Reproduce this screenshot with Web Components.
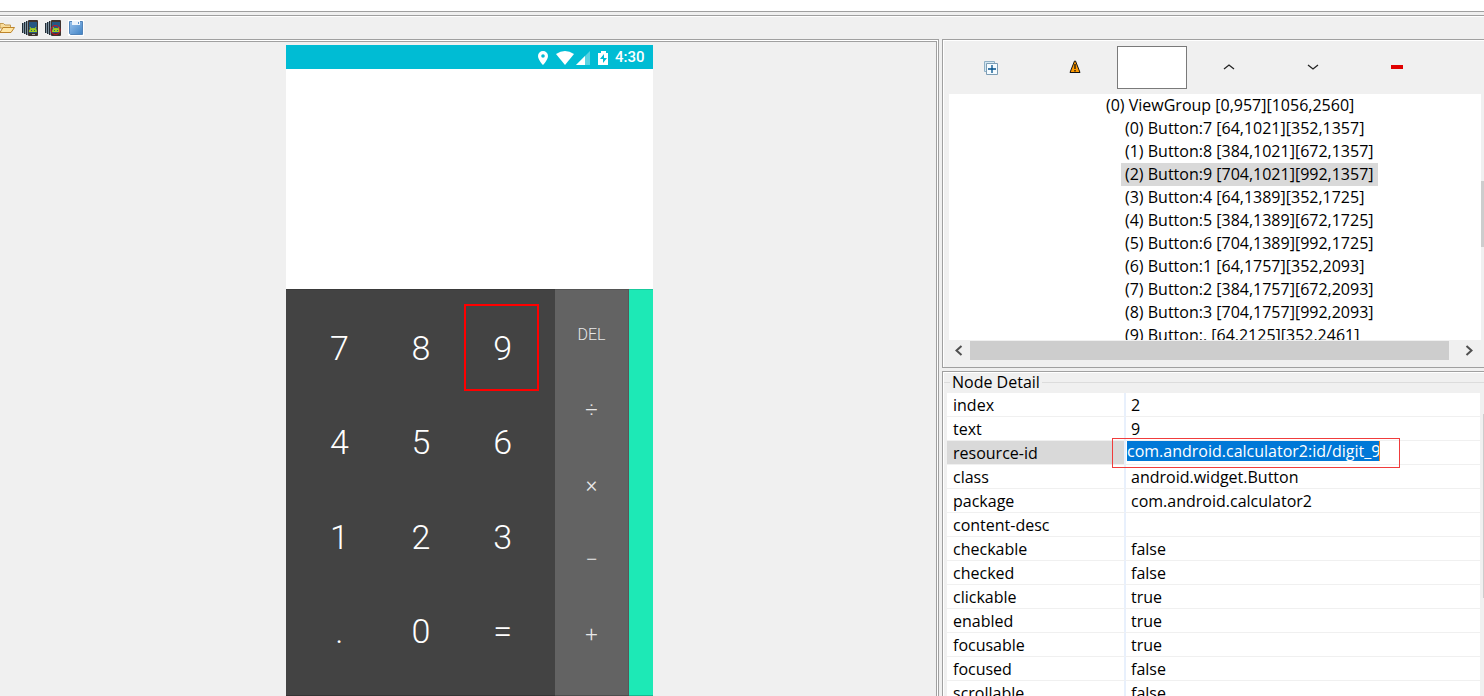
<!DOCTYPE html>
<html lang="en">
<head>
<meta charset="utf-8">
<title>UI Automator Viewer</title>
<style>
  html, body { margin: 0; height: 100%; }
  body { background: #f0f0f0; color: #000; font: 16px/23px "Open Sans", "Noto Sans", sans-serif; overflow: hidden; }
</style>
</head>
<body>
<viewer-app></viewer-app>
<script>
const define = (name, html, setup) => customElements.define(name, class extends HTMLElement {
  constructor() {
    super();
    this.attachShadow({ mode: "open" }).innerHTML = html;
  }
  connectedCallback() { if (setup) setup(this, this.shadowRoot); }
});

define("tool-bar", `
<style>
  :host { display: flex; align-items: center; box-sizing: border-box; height: 24px; flex: none;
    border-top: 1px solid #a0a0a0; box-shadow: inset 0 1px #fff; padding-top: 1px; }
  button { all: unset; width: 16px; height: 16px; margin-right: 7px; display: block; }
  button:first-of-type { width: 15px; }
  svg { display: block; }
</style>
<button aria-label="Open"><svg width="15" height="16" viewBox="0 0 15 16"><path d="M0 3.500h3.500l1.500 1.500h5.500v3H0z" fill="#f8dc9c" stroke="#c39a50"/><path d="M0 12.500L3 7.500h11.500l-3.500 5z" fill="#ffe6a5" stroke="#bd842b"/></svg></button>
<button aria-label="Device Screenshot"><svg width="16" height="16" viewBox="0 0 16 16"><path d="M0 3h1v10H0zM2 2h1v12H2zM4 1h1v14H4z" fill="#222c35"/><path d="M1 3h1v10H1zM3 2h1v12H3zM5 1h1v14H5z" fill="#7f93a1"/><rect x="6" width="10" height="16" rx="1" fill="#3e332e"/><path d="M7 2h8v11H7z" fill="#245783"/><path d="M7 12a4 4 0 0 1 8 0z" fill="#a1cc20"/><path d="M8 7l1 2M14 7l-1 2" stroke="#a1cc20"/><path d="M9 10h1v1H9zM12 10h1v1h-1z" fill="#245783"/><path d="M10 14h3v1h-3z" fill="#aaa"/></svg></button>
<button aria-label="Compressed Screenshot"><svg width="16" height="16" viewBox="0 0 16 16"><path d="M0 3h1v10H0zM2 2h1v12H2zM4 1h1v14H4z" fill="#222c35"/><path d="M1 3h1v10H1zM3 2h1v12H3zM5 1h1v14H5z" fill="#7f93a1"/><rect x="6" width="10" height="16" rx="1" fill="#3e332e"/><path d="M7 2h8v11H7z" fill="#245783"/><path d="M7 12a4 4 0 0 1 8 0z" fill="#a1cc20"/><path d="M8 7l1 2M14 7l-1 2" stroke="#a1cc20"/><path d="M9 10h1v1H9zM12 10h1v1h-1z" fill="#245783"/><circle cx="10.500" cy="10" r="4.500" fill="none" stroke="#e00b1b"/></svg></button>
<button aria-label="Save"><svg width="16" height="16" viewBox="0 0 16 16"><defs><linearGradient id="g" x2="1" y2="1"><stop stop-color="#9cc4ee"/><stop offset="1" stop-color="#3f82c4"/></linearGradient></defs><path d="M0 0h16v16H0z" fill="#fff"/><path d="M1.500 1.500h13v13h-12l-1-1z" fill="url(#g)" stroke="#5183b8"/><path d="M4 1h8v4H4z" fill="#eef4fb"/><path d="M10 2h1v2h-1z" fill="#5d91c9"/></svg></button>`);

define("calc-key", `
<style>
  :host { display: grid; color: #fff; font: 300 34px/40px Roboto, sans-serif; }
  :host([op]) { font-size: 16px; line-height: 20px; color: #e8e8e8; }
  :host([sign]) { font-size: 22px; }
  button { all: unset; text-align: center; }
</style>
<button><slot></slot></button>`);

define("device-screen", `
<style>
  :host { display: flex; flex-direction: column; position: relative; width: 367px; height: 652px; flex: none; background: #fff; }
  header { display: flex; align-items: center; justify-content: flex-end; box-sizing: border-box; height: 24px; padding: 1px 8px 0 0; background: #00bcd4; color: #fff; font: 500 15px/23px Roboto, sans-serif; flex: none; }
  header svg { display: block; }
  .display { flex: none; height: 220px; }
  .pads { flex: 1; display: flex; }
  .digits { box-sizing: border-box; width: 269px; padding: 11px 11px 17px 13px; display: grid; grid-template: repeat(4, 1fr) / repeat(3, 1fr); background: #434343; }
  .ops { box-sizing: border-box; width: 74px; padding: 7px 0 22px; display: grid; grid-template-rows: repeat(5, 1fr); background: #636363; box-shadow: inset -1px 0 #585858; }
  .more { flex: 1; background: #1de9b6; }
  .pads > * { border-top: 1px solid #0002; border-bottom: 2px solid #0003; }
  .mark { position: absolute; left: 178px; top: 259px; width: 71px; height: 83px; border: 2px solid #f00; pointer-events: none; }
</style>
<header>
  <svg width="78" height="16" viewBox="0 0 78 16"><path fill-rule="evenodd" d="M6 1a5 5 0 0 0-5 5c0 4 5 9 5 9s5-5 5-9a5 5 0 0 0-5-5zm0 3.200a1.800 1.800 0 1 1 0 3.600 1.800 1.800 0 0 1 0-3.600z" fill="#fff"/><path d="M19 4q9-6 18 0l-9 11z" fill="#fff"/><path d="M53 1v14H39z" fill="#fff" opacity=".35"/><path d="M48 6v9h-9z" fill="#fff"/><path fill-rule="evenodd" d="M64 1h5v2h2v12h-10V3h3zm3 3l-4 5h3v4l4-5h-3z" fill="#fff"/></svg>
  <span>4:30</span>
</header>
<div class="display"></div>
<div class="pads">
  <div class="digits"><calc-key>7</calc-key><calc-key>8</calc-key><calc-key>9</calc-key><calc-key>4</calc-key><calc-key>5</calc-key><calc-key>6</calc-key><calc-key>1</calc-key><calc-key>2</calc-key><calc-key>3</calc-key><calc-key>.</calc-key><calc-key>0</calc-key><calc-key>=</calc-key></div>
  <div class="ops"><calc-key op>DEL</calc-key><calc-key op sign>÷</calc-key><calc-key op sign>×</calc-key><calc-key op sign>−</calc-key><calc-key op sign>+</calc-key></div>
  <div class="more"></div>
</div>
<div class="mark"></div>`);

define("tree-item", `
<style>
  :host { display: block; height: 23px; padding-left: 172px; white-space: nowrap; }
  :host([root]) { padding-left: 153px; }
  span { display: inline-block; padding: 0 4px 0 4px; height: 23px; }
  :host([selected]) span { background: #d9d9d9; }
</style>
<span><slot></slot></span>`);

define("node-tree", `
<style>
  :host { display: flex; flex-direction: column; flex: none; box-sizing: border-box; height: 329px; border: 1px solid #a0a0a0; border-right: 0; box-shadow: inset 1px 1px #fff; padding: 1px 0 7px 6px; }
  .bar { display: grid; grid-template-columns: 84px 84px 70px repeat(3, 84px); align-items: center; height: 53px; flex: none; }
  button { all: unset; display: grid; place-items: center; height: 40px; }
  button:not(:first-child) { margin-bottom: 2px; }
  input { all: unset; box-sizing: border-box; width: 70px; height: 43px; background: #fff; border: 1px solid #7a7a7a; }
  .body { flex: 1; min-height: 0; display: flex; }
  .list { flex: 1; background: #fff; overflow: hidden; }
  .v { width: 3px; background: #f0f0f0; padding-top: 87px; }
  .v i { display: block; height: 66px; background: #cdcdcd; }
  .h { display: flex; height: 19px; align-items: stretch; flex: none; margin: 1px 3px 0 0; }
  .h svg { width: 21px; height: 19px; }
  .h i { flex: 1; background: #cdcdcd; }
  .h svg + i + svg { width: 32px; }
</style>
<div class="bar">
  <button aria-label="Expand all"><svg width="14" height="14" viewBox="0 0 14 14"><path d="M.5.5h10v10H.5z" fill="#d5e8f2" stroke="#8fb0c6"/><path d="M2.500 2.500h11v11h-11z" fill="#f4fbff" stroke="#7c9db5"/><path d="M4 8h8M8 4v8" stroke="#00508c" stroke-width="1.300"/></svg></button>
  <button aria-label="Toggle NAF nodes"><svg width="12" height="14" viewBox="0 0 12 14"><path d="M5.500 1L1 12.500h10L6.500 1z" fill="#ff9a00" stroke="#111"/><path d="M6 4v5M6 10v1.500" stroke="#111" stroke-width="1.300"/></svg></button>
  <input aria-label="Search">
  <button aria-label="Previous"><svg width="12" height="8" viewBox="0 0 12 8"><path d="M1 6l5-4 5 4" fill="none" stroke="#222" stroke-width="1.300"/></svg></button>
  <button aria-label="Next"><svg width="12" height="8" viewBox="0 0 12 8"><path d="M1 2l5 4 5-4" fill="none" stroke="#222" stroke-width="1.300"/></svg></button>
  <button aria-label="Delete"><svg width="12" height="4"><path d="M0 0h12v4H0z" fill="#e00000"/></svg></button>
</div>
<div class="body"><div class="list"><slot></slot></div><div class="v"><i></i></div></div>
<div class="h"><svg viewBox="0 0 21 19"><path d="M12.500 5L7.500 9.500l5 4.500" fill="none" stroke="#505050" stroke-width="2"/></svg><i></i><svg viewBox="0 0 32 19"><path d="M17.500 5l5 4.500-5 4.500" fill="none" stroke="#505050" stroke-width="2"/></svg></div>`);

define("node-detail", `
<style>
  :host { display: block; flex: 1; min-height: 0; overflow: hidden; margin-top: 3px; border: 1px solid #a0a0a0; border-width: 1px 0 0 1px; box-shadow: inset 1px 1px #fff; }
  h2 { margin: 0; padding: 0 0 0 1px; font: inherit; line-height: 21px; display: flex; align-items: center; gap: 2px; }
  h2::before { content: ""; width: 6px; height: 1px; background: #dcdcdc; }
  h2::after { content: ""; flex: 1; height: 1px; background: #dcdcdc; }
  .body { display: flex; padding-left: 4px; }
  table { flex: 1; border-collapse: separate; border-spacing: 0; table-layout: fixed; background: #fff; width: 100%; }
  th, td { box-sizing: border-box; height: 24px; padding: 0 0 0 6px; line-height: 22px; font-weight: 400; text-align: left; border-bottom: 1px solid #f0f0f0; vertical-align: bottom; }
  th { width: 179px; border-right: 2px solid #e8f0fc; }
  td { padding-left: 5px; }
  tr.on th { background: #d9d9d9; }
  tr.on td { position: relative; padding-left: 1px; vertical-align: top; }
  input { all: unset; display: block; box-sizing: border-box; width: 253px; height: 20px; line-height: 20px; background: #0078d7; color: #fff; border-right: 1px solid #f58220; }
  .mark { position: absolute; left: -14px; top: -3px; width: 286px; height: 28px; border: 1px solid #f03c3c; pointer-events: none; }
  .v { flex: none; width: 1px; margin-left: 3px; padding-top: 21px; background: #f0f0f0; }
  .v i { display: block; height: 184px; background: #cdcdcd; }
</style>
<h2>Node Detail</h2>
<div class="body"><table><tbody></tbody></table><div class="v"><i></i></div></div>`,
(host, root) => {
  const rows = [["index", "2"], ["text", "9"], ["resource-id", "com.android.calculator2:id/digit_9"], ["class", "android.widget.Button"], ["package", "com.android.calculator2"], ["content-desc", ""], ["checkable", "false"], ["checked", "false"], ["clickable", "true"], ["enabled", "true"], ["focusable", "true"], ["focused", "false"], ["scrollable", "false"]];
  root.querySelector("tbody").innerHTML = rows.map(([k, v]) => k === "resource-id"
    ? `<tr class="on"><th scope="row" id="rid">${k}</th><td><input aria-labelledby="rid" value="${v}"><div class="mark"></div></td></tr>`
    : `<tr><th scope="row">${k}</th><td>${v}</td></tr>`).join("");
});

define("viewer-app", `
<style>
  :host { display: flex; flex-direction: column; height: 100vh; }
  .menu { height: 11px; flex: none; background: #fff; border-bottom: 1px solid #a0a0a0; margin-bottom: 3px; }
  main { flex: 1; min-height: 0; display: grid; grid-template-columns: 939fr 542fr; gap: 3px; }
  .left { border: 1px solid #a0a0a0; border-left: 0; border-bottom: 0; background: #fff; padding: 1px 1px 0 0; min-height: 0; display: flex; }
  .canvas { flex: 1; border: 1px solid #a0a0a0; border-left: 0; border-bottom: 0; padding-top: 3px; padding-left: 2px; background: #f0f0f0; display: flex; justify-content: center; align-items: flex-start; overflow: hidden; }
  .right { display: flex; flex-direction: column; min-height: 0; min-width: 0; }
</style>
<div class="menu"></div>
<tool-bar></tool-bar>
<main>
  <section class="left"><div class="canvas"><device-screen></device-screen></div></section>
  <section class="right">
    <node-tree>
      <tree-item root>(0) ViewGroup [0,957][1056,2560]</tree-item>
      <tree-item>(0) Button:7 [64,1021][352,1357]</tree-item>
      <tree-item>(1) Button:8 [384,1021][672,1357]</tree-item>
      <tree-item selected>(2) Button:9 [704,1021][992,1357]</tree-item>
      <tree-item>(3) Button:4 [64,1389][352,1725]</tree-item>
      <tree-item>(4) Button:5 [384,1389][672,1725]</tree-item>
      <tree-item>(5) Button:6 [704,1389][992,1725]</tree-item>
      <tree-item>(6) Button:1 [64,1757][352,2093]</tree-item>
      <tree-item>(7) Button:2 [384,1757][672,2093]</tree-item>
      <tree-item>(8) Button:3 [704,1757][992,2093]</tree-item>
      <tree-item>(9) Button:. [64,2125][352,2461]</tree-item>
    </node-tree>
    <node-detail></node-detail>
  </section>
</main>`);
</script>
</body>
</html>
